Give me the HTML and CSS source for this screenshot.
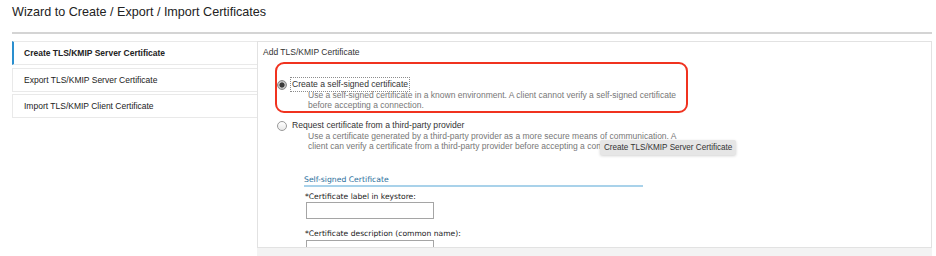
FILE: index.html
```html
<!DOCTYPE html>
<html lang="en">
<head>
    <meta charset="UTF-8">
    <title>Wizard to Create / Export / Import Certificates</title>
    <link rel="stylesheet" href="styles.css">
</head>
<body>
    <div class="page">
        <!-- Titre du wizard -->
        <h1 class="wizard-title">Wizard to Create / Export / Import Certificates</h1>

        <div class="wizard">
            <!-- Liste des etapes -->
            <ul class="steps">
                <li class="step active">Create TLS/KMIP Server Certificate</li>
                <li class="step">Export TLS/KMIP Server Certificate</li>
                <li class="step">Import TLS/KMIP Client Certificate</li>
            </ul>

            <div class="panel-col">
                <div class="panel">
                    <div class="panel-title">Add TLS/KMIP Certificate</div>

                    <div class="options">
                        <div class="option highlighted">
                            <label class="option-row">
                                <input type="radio" name="certType" class="radio" checked>
                                <span class="option-label focused">Create a self-signed certificate</span>
                            </label>
                            <p class="option-desc">Use a self-signed certificate in a known environment. A client cannot verify a self-signed certificate before accepting a connection.</p>
                        </div>

                        <div class="option">
                            <label class="option-row">
                                <input type="radio" name="certType" class="radio">
                                <span class="option-label">Request certificate from a third-party provider</span>
                            </label>
                            <p class="option-desc">Use a certificate generated by a third-party provider as a more secure means of communication. A client can verify a certificate from a third-party provider before accepting a connection.</p>
                        </div>
                    </div>

                    <!-- Infobulle au survol -->
                    <div class="tooltip">Create TLS/KMIP Server Certificate</div>

                    <div class="section">
                        <div class="section-title">Self-signed Certificate</div>
                        <label class="field-label" for="certLabel">*Certificate label in keystore:</label>
                        <input type="text" id="certLabel" class="field-input">
                        <label class="field-label second" for="certDesc">*Certificate description (common name):</label>
                        <input type="text" id="certDesc" class="field-input tight">
                    </div>
                </div>
                <div class="panel-foot"></div>
            </div>
        </div>
    </div>
</body>
</html>
```

FILE: styles.css
```css
/* Page de base */
body {
    margin: 0;
    background-color: #ffffff;
    font-family: "Liberation Sans", Arial, sans-serif;
    color: #333;
}

.page {
    padding: 0 4px 0 12px;
}

/* Titre avec ligne en dessous */
.wizard-title {
    margin: 5px 0 0;
    padding-bottom: 12px;
    border-bottom: 2px solid #d4d4d4;
    font-size: 12.6px;
    line-height: 15px;
    font-weight: normal;
    color: #222;
}

.wizard {
    display: flex;
    margin-top: 7px;
}

/* Colonne des etapes */
.steps {
    list-style: none;
    margin: 0;
    padding: 0;
    width: 245px;
    flex-shrink: 0;
    display: flex;
    flex-direction: column;
    gap: 2.5px;
}

.step {
    height: 24px;
    box-sizing: border-box;
    padding-left: 11px;
    border: 1px solid #e9e9e9;
    border-right: none;
    font-size: 8.5px;
    line-height: 22px;
    color: #222;
}

.step.active {
    border-left: 2px solid #2a8fcf;
    padding-left: 10px;
    font-weight: bold;
}

/* Panneau de droite */
.panel-col {
    flex: 1;
}

.panel {
    position: relative;
    height: 207px;
    box-sizing: border-box;
    border: 1px solid #e2e2e2;
    padding: 5px 0 0 5px;
    overflow: hidden;
}

.panel-foot {
    height: 10px;
    background-color: #f3f3f3;
}

.panel-title {
    font-size: 8.5px;
    line-height: 11px;
    color: #333;
}

.options {
    margin-left: 14px;
    margin-top: 4px;
}

.option-row {
    display: flex;
    align-items: center;
}

.radio {
    appearance: none;
    -webkit-appearance: none;
    width: 10px;
    height: 10px;
    margin: 0 3px 0 0;
    border: 1px solid #9a9a9a;
    border-radius: 50%;
    background: linear-gradient(#ffffff, #e8e8e8);
    box-sizing: border-box;
}

.radio:checked {
    background: radial-gradient(circle, #3a3a3a 0 2.3px, #bdbdbd 2.8px);
    border-color: #8a8a8a;
}

.option-label {
    display: inline-block;
    padding: 0 1px;
    border: 1px solid transparent;
    font-size: 8.6px;
    line-height: 13px;
    color: #333;
}

.option-label.focused {
    border: 1px dotted #8c8c8c;
}

.option-desc {
    margin: -2px 0 0 31px;
    width: 378px;
    font-size: 8.5px;
    line-height: 10px;
    color: #777;
}

/* Encadre rouge autour du choix */
.highlighted {
    width: 413px;
    box-sizing: border-box;
    margin-left: -2px;
    padding: 13px 0 1px;
    border: 2px solid #f0321f;
    border-radius: 9px;
}

.option + .option {
    margin-top: 5px;
}

.tooltip {
    position: absolute;
    left: 342px;
    top: 98px;
    padding: 0 4px;
    background-color: #e6e6e6;
    border-radius: 2px;
    box-shadow: 0 1px 3px rgba(0, 0, 0, 0.18);
    font-size: 8.15px;
    line-height: 15px;
    color: #333;
}

/* Section du formulaire */
.section {
    margin: 23px 0 0 41px;
    width: 339px;
    font-family: "DejaVu Sans", Verdana, sans-serif;
}

.section-title {
    font-size: 7.7px;
    line-height: 11px;
    color: #2b6f9c;
    border-bottom: 2px solid #a9d2ea;
}

.field-label {
    display: block;
    margin: 4px 0 0 1px;
    font-size: 7.6px;
    line-height: 11px;
    color: #222;
}

.field-label.second {
    margin-top: 9px;
}

.field-input {
    display: block;
    margin-left: 2px;
    width: 128px;
    height: 17px;
    box-sizing: border-box;
    border: 1px solid #a5a5a5;
    padding: 0 2px;
}

.field-input.tight {
    margin-top: 1px;
}
```
